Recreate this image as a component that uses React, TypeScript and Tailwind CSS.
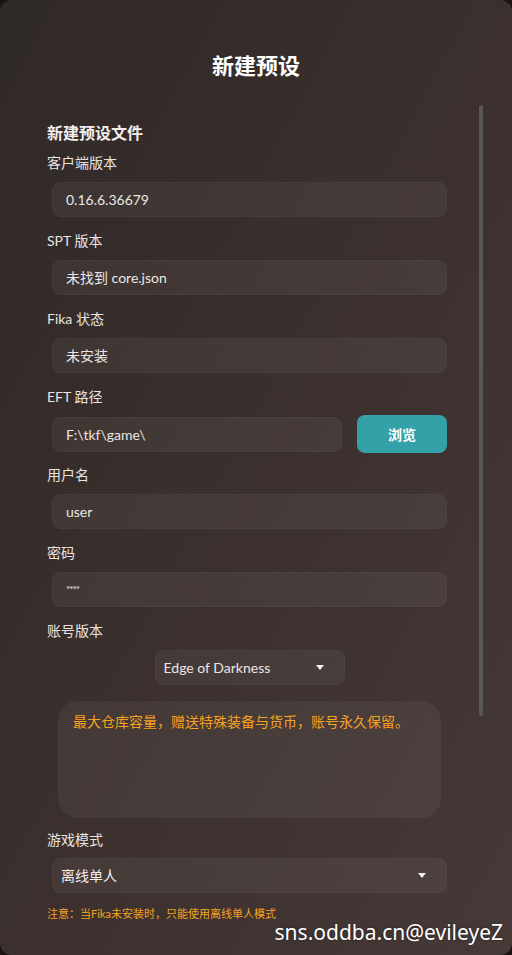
import React from "react";

const font = { fontFamily: 'Lato, "Noto Sans CJK SC", sans-serif' };

function Label({ children }: { children: React.ReactNode }) {
  return <div className="pl-[47px] h-5 leading-5 text-[14px] text-[#e9e3e1]">{children}</div>;
}

function Field({ value, small }: { value: string; small?: boolean }) {
  return (
    <div className="ml-[52px] w-[395px] h-[35px] mt-[9px] mb-[14px] flex items-center rounded-[9px] bg-[#ffffff0d] border border-[#ffffff08] pl-[13px] text-[14px] text-[#ece6e4]">
      <span className={small ? "text-[10px] tracking-[-1px]" : ""}>{value}</span>
    </div>
  );
}

function Caret() {
  return (
    <svg width="8" height="5" viewBox="0 0 8 5">
      <path d="M0 0 L8 0 L4 5 Z" fill="#f2f2f2" />
    </svg>
  );
}

export default function App() {
  return (
    <div className="w-[512px] h-[955px] bg-[#1b1212] overflow-hidden" style={font}>
      <div className="relative w-[512px] h-[955px] rounded-[12px] bg-gradient-to-br from-[#2f2927] via-[#3b302e] to-[#463937] overflow-hidden">
        <div className="pt-[52px] h-[121px] text-center text-[22px] leading-7 font-bold text-white">新建预设</div>

        <div className="pl-[47px] h-6 leading-6 text-[16px] font-bold text-[#f2eeec] mb-[8px]">新建预设文件</div>

        <Label>客户端版本</Label>
        <Field value="0.16.6.36679" />
        <Label>SPT 版本</Label>
        <Field value="未找到 core.json" />
        <Label>Fika 状态</Label>
        <Field value="未安装" />
        <Label>EFT 路径</Label>
        <div className="ml-[52px] w-[395px] mt-[8px] mb-[12px] flex items-center gap-[15px]">
          <div className="w-[290px] h-[35px] flex items-center rounded-[9px] bg-[#ffffff0d] border border-[#ffffff08] pl-[13px] text-[14px] text-[#ece6e4]">
            F:\tkf\game\
          </div>
          <div className="w-[90px] h-[38px] rounded-[8px] bg-[#34a1a9] flex items-center justify-center text-[14px] font-bold text-white">
            浏览
          </div>
        </div>
        <Label>用户名</Label>
        <Field value="user" />
        <Label>密码</Label>
        <Field value="****" small />
        <Label>账号版本</Label>
        <div className="ml-[52px] w-[395px] flex justify-center mt-[9px]">
          <div className="w-[190px] h-[35px] flex items-center justify-between rounded-[9px] bg-[#ffffff0d] border border-[#ffffff08] pl-[8px] pr-[20px] text-[14px] text-[#ece6e4]">
            <span>Edge of Darkness</span>
            <Caret />
          </div>
        </div>
        <div className="ml-[58px] w-[383px] h-[117px] mt-[16px] rounded-[20px] bg-[#ffffff0d] pt-[11px] pl-[15px] text-[14px] leading-5 text-[#f5a21e]">
          最大仓库容量，赠送特殊装备与货币，账号永久保留。
        </div>
        <div className="mt-[12px]">
          <Label>游戏模式</Label>
        </div>
        <div className="ml-[52px] w-[395px] h-[35px] mt-[8px] flex items-center justify-between rounded-[9px] bg-[#ffffff0d] border border-[#ffffff08] pl-[8px] pr-[20px] text-[14px] text-[#f2eeec]">
          <span>离线单人</span>
          <Caret />
        </div>
        <div className="pl-[47px] mt-[13px] text-[11px] leading-4 text-[#f5a21e]">
          注意：当Fika未安装时，只能使用离线单人模式
        </div>

        <div className="absolute left-[479px] top-[105px] w-[4px] h-[611px] rounded-full bg-[#5a5756]" />
        <div
          className="absolute right-[9px] top-[918px] text-[21px] leading-7 text-white"
          style={{ fontFamily: '"Noto Sans", sans-serif', textShadow: "0 0 2px rgba(0,0,0,0.6)" }}
        >
          sns.oddba.cn@evileyeZ
        </div>
      </div>
    </div>
  );
}
